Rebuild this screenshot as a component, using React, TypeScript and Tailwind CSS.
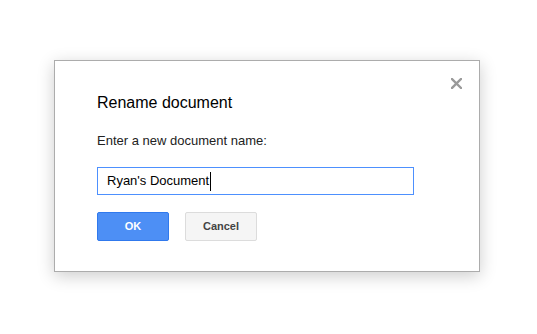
import React from "react";

export default function App() {
  return (
    <div
      className="w-[537px] h-[334px] bg-white pt-[60px] pl-[54px]"
      style={{ fontFamily: '"Liberation Sans", Arial, sans-serif' }}
    >
      <div className="relative w-[426px] h-[212px] bg-white border border-[#acacac] shadow-[0_4px_16px_rgba(0,0,0,0.2)] pt-[32px] pl-[42px]">
        <button className="absolute top-[17px] right-[17px] w-[11px] h-[11px]" aria-label="Close">
          <svg width="11" height="11" viewBox="0 0 11 11" className="block">
            <path d="M1 1 L10 10 M10 1 L1 10" stroke="#9a9a9a" strokeWidth="2.4" strokeLinecap="square" />
          </svg>
        </button>
        <div className="text-[16px] leading-[20px] text-[#000]">Rename document</div>
        <div className="mt-[20px] text-[13px] leading-[16px] text-[#222]">Enter a new document name:</div>
        <div className="mt-[18px] w-[317px] h-[28px] border border-[#4d90fe] flex items-center pl-[9px] text-[13px] text-[#000]">
          <span>Ryan's Document</span>
          <span className="inline-block w-px h-[19px] bg-black ml-px" />
        </div>
        <div className="mt-[17px] flex gap-[16px]">
          <div className="w-[72px] h-[29px] rounded-[2px] bg-[#4d8ff5] border border-[#3079ed] flex items-center justify-center text-[11px] font-bold text-white">
            OK
          </div>
          <div className="w-[72px] h-[29px] rounded-[2px] bg-[#f5f5f5] border border-[#dcdcdc] flex items-center justify-center text-[11px] font-bold text-[#444]">
            Cancel
          </div>
        </div>
      </div>
    </div>
  );
}
